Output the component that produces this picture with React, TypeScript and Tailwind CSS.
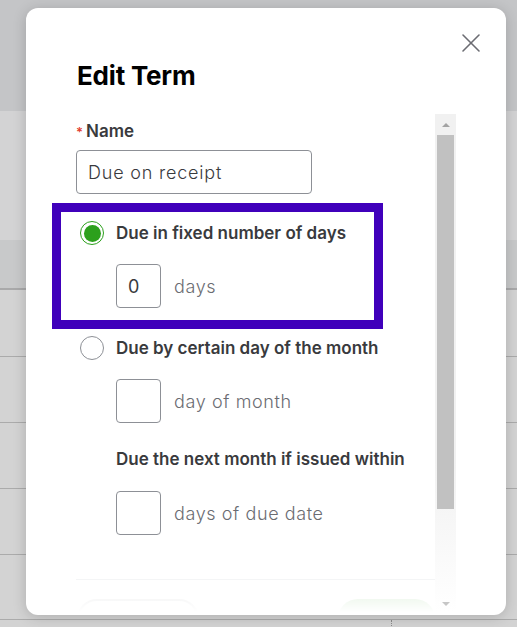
import { X } from 'lucide-react';

function Radio({ checked }: { checked?: boolean }) {
  return checked ? (
    <span className="flex h-[24px] w-[24px] shrink-0 items-center justify-center rounded-full border-[1.5px] border-[#2ca01c] bg-white">
      <span className="h-[17px] w-[17px] rounded-full bg-[#2ca01c]" />
    </span>
  ) : (
    <span className="h-[24px] w-[24px] shrink-0 rounded-full border border-[#8d9096] bg-white" />
  );
}

function SmallField({ value, suffix }: { value?: string; suffix: string }) {
  return (
    <div className="flex items-center gap-[13px] pl-[40px]">
      <div className="flex h-[44px] w-[45px] items-center rounded-[4px] border border-[#8d9096] px-[11px] text-[18px] text-[#393a3d]">
        {value}
      </div>
      <span className="text-[18px] font-light tracking-[0.6px] text-[#6b6c72]">{suffix}</span>
    </div>
  );
}

function Scrollbar() {
  return (
    <div className="flex w-[21px] flex-col bg-gradient-to-b from-[#f1f1f1] from-70% to-white">
      <div className="flex h-[21px] items-center justify-center">
        <span className="h-0 w-0 border-x-[4px] border-b-[4px] border-x-transparent border-b-[#a3a3a3]" />
      </div>
      <div className="ml-[2px] h-[374px] w-[17px] bg-[#c1c1c1]" />
      <div className="flex flex-1 items-end justify-center pb-[6px]">
        <span className="h-0 w-0 border-x-[4px] border-t-[4px] border-x-transparent border-t-[#c6c6c6]" />
      </div>
    </div>
  );
}

export default function App() {
  return (
    <div className="relative h-[627px] w-[517px] overflow-hidden bg-[#d3d3d3] font-[Inter,'Noto_Sans',sans-serif]">
      {/* Page behind the overlay */}
      <div className="h-[111px] bg-[#c4c5c7]" />
      <div className="h-[129px] bg-[#d3d3d4]" />
      <div className="h-[50px] border-b-2 border-[#a9a9aa] bg-[#c8c9ca]" />
      <div className="h-[67px] border-b border-[#ababab]" />
      <div className="h-[66px] border-b border-[#ababab]" />
      <div className="h-[66px] border-b border-[#ababab]" />
      <div className="h-[66px] border-b border-[#ababab]" />
      <div className="h-[65px] border-b border-[#ababab]" />
      <div className="flex h-[20px]">
        <div className="w-[392px] border-r border-dotted border-[#8a8a8a]" />
      </div>

      {/* Modal */}
      <div className="absolute left-[26px] top-[8px] h-[607px] w-[480px] overflow-hidden rounded-[12px] bg-white shadow-[0_2px_14px_rgba(0,0,0,0.18)]">
        <button className="absolute left-[429px] top-[19px] text-[#6b6c72]">
          <X size={32} strokeWidth={1.2} />
        </button>

        <h2 className="pl-[51px] pt-[52px] text-[26px] font-bold leading-[32px] tracking-[-0.2px] text-black">
          Edit Term
        </h2>

        <div className="ml-[50px] mt-[22px] flex h-[498px] w-[380px]">
          <div className="relative flex-1 overflow-hidden">
            <div className="pt-[7px] text-[17px] font-semibold leading-[20px] text-[#393a3d]">
              <span className="mr-[3px] text-[13px] text-[#e2402f]">*</span>Name
            </div>
            <div className="mt-[8px] flex h-[44px] w-[236px] items-center rounded-[4px] border border-[#8d9096] px-[11px] text-[18px] font-light tracking-[0.8px] text-[#393a3d]">
              Due on receipt
            </div>

            <div className="mt-[27px] flex items-center gap-[12px] pl-[4px]">
              <Radio checked />
              <span className="text-[17px] font-semibold leading-[20px] text-[#393a3d]">Due in fixed number of days</span>
            </div>
            <div className="mt-[19px]">
              <SmallField value="0" suffix="days" />
            </div>

            <div className="mt-[28px] flex items-center gap-[12px] pl-[4px]">
              <Radio />
              <span className="text-[17px] font-semibold leading-[20px] text-[#393a3d]">Due by certain day of the month</span>
            </div>
            <div className="mt-[19px]">
              <SmallField suffix="day of month" />
            </div>

            <div className="mt-[26px] pl-[40px] text-[17px] font-semibold leading-[20px] text-[#393a3d]">
              Due the next month if issued within
            </div>
            <div className="mt-[22px]">
              <SmallField suffix="days of due date" />
            </div>

            <div className="mt-[44px] border-t border-[#d4d7dc]" />

            <div className="mt-[19px] flex justify-between">
              <div className="ml-[1px] h-[40px] w-[122px] rounded-full border-2 border-[#8d9096]" />
              <div className="h-[40px] w-[97px] rounded-full bg-[#2ca01c]" />
            </div>

            {/* fade at the bottom of the scroll area */}
            <div className="absolute inset-x-0 bottom-0 h-[50px] bg-gradient-to-b from-white/0 via-white/85 via-40% to-white" />
          </div>
          <Scrollbar />
        </div>

        {/* highlight annotation */}
        <div className="absolute left-[26px] top-[195px] h-[126px] w-[331px] border-[9px] border-[#4000bb]" />
      </div>
    </div>
  );
}
